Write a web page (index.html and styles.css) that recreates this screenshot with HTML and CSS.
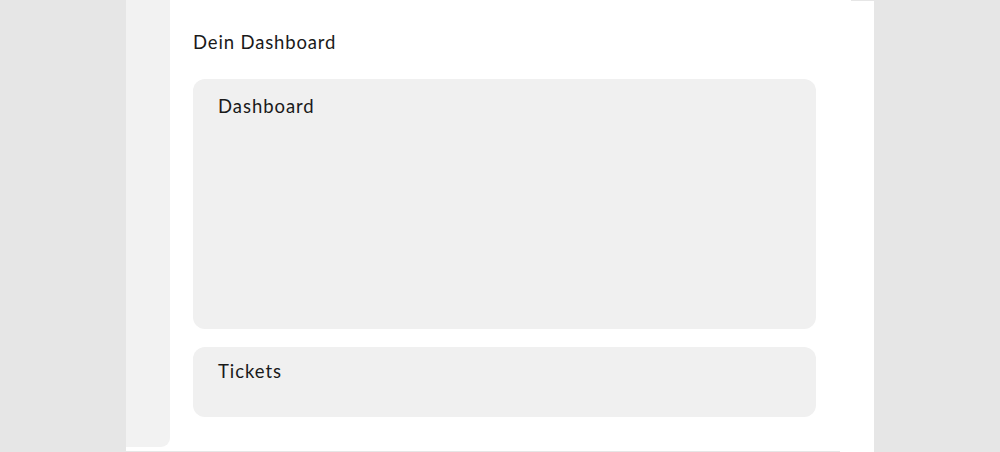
FILE: index.html
```html
<!DOCTYPE html>
<html lang="de">
<head>
<meta charset="utf-8">
<title>Dein Dashboard</title>
<link rel="stylesheet" href="styles.css">
</head>
<body>
<div class="app">
  <aside class="sidebar"></aside>
  <main class="main">
    <h1 class="page-title">Dein Dashboard</h1>
    <section class="card card-dashboard">
      <h2 class="card-title">Dashboard</h2>
    </section>
    <section class="card card-tickets">
      <h2 class="card-title">Tickets</h2>
    </section>
  </main>
</div>
</body>
</html>
```
FILE: styles.css
```css
html, body {
  margin: 0;
  padding: 0;
  height: 100%;
}
body {
  background: #e6e6e6;
  font-family: "Lato", "Noto Sans", sans-serif;
  color: #1a1a1a;
  overflow: hidden;
}
.app {
  position: relative;
  width: 748px;
  height: 452px;
  margin: 0 auto;
  display: flex;
  background: #ffffff;
}
.app::before {
  content: "";
  position: absolute;
  top: 0;
  right: 0;
  width: 23px;
  height: 1px;
  background: #e6e6e6;
}
.app::after {
  content: "";
  position: absolute;
  left: 0;
  bottom: 0;
  width: 714px;
  height: 1px;
  background: #e6e6e6;
}
.sidebar {
  width: 44px;
  height: 447px;
  flex: none;
  background: #f2f2f2;
  border-bottom-right-radius: 9px;
}
.main {
  flex: 1;
  padding: 30px 58px 0 23px;
  display: flex;
  flex-direction: column;
  gap: 18px;
}
.page-title {
  margin: 0 0 7px;
  font-size: 18.5px;
  line-height: 24px;
  font-weight: 400;
  letter-spacing: 0.85px;
}
.card {
  background: #f0f0f0;
  border-radius: 12px;
  padding: 15px 25px;
  box-sizing: border-box;
}
.card-dashboard {
  height: 250px;
}
.card-tickets {
  height: 70px;
  padding-top: 12px;
}
.card-title {
  margin: 0;
  font-size: 18.5px;
  line-height: 24px;
  font-weight: 400;
  letter-spacing: 0.95px;
}
```
